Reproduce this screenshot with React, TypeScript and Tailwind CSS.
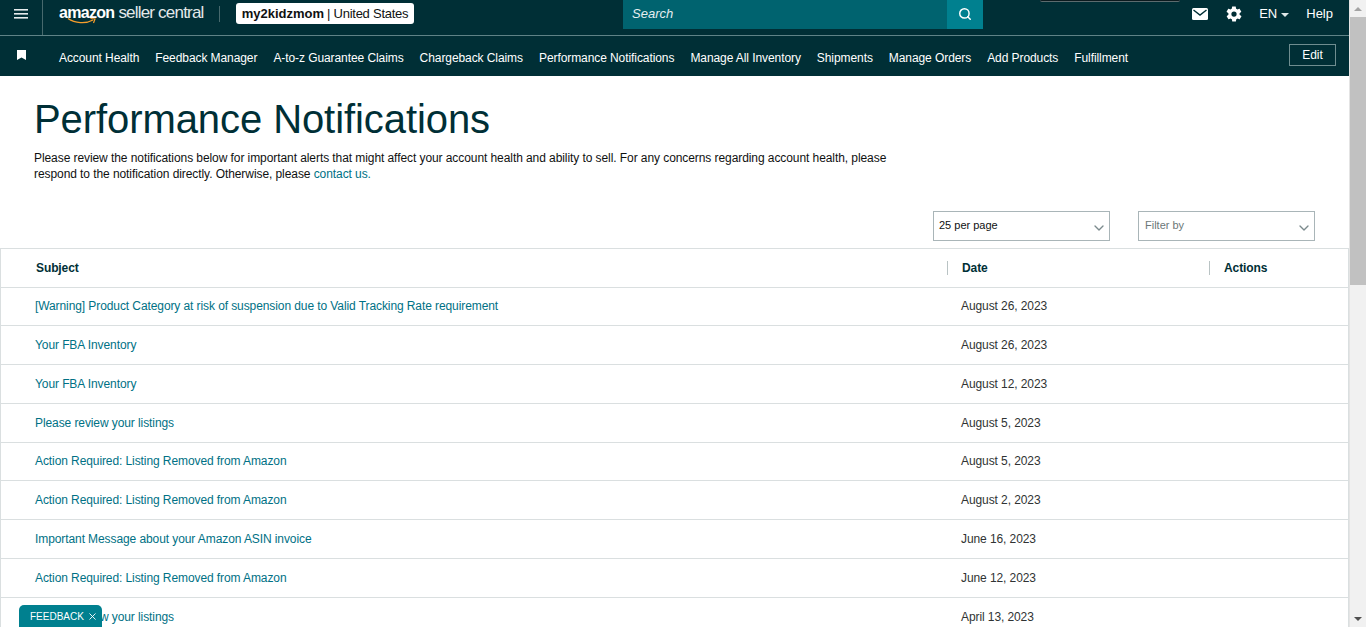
import { ChevronDown, Search, X } from 'lucide-react'

const navLinks = [
  'Account Health',
  'Feedback Manager',
  'A-to-z Guarantee Claims',
  'Chargeback Claims',
  'Performance Notifications',
  'Manage All Inventory',
  'Shipments',
  'Manage Orders',
  'Add Products',
  'Fulfillment',
]

const rows = [
  ['[Warning] Product Category at risk of suspension due to Valid Tracking Rate requirement', 'August 26, 2023'],
  ['Your FBA Inventory', 'August 26, 2023'],
  ['Your FBA Inventory', 'August 12, 2023'],
  ['Please review your listings', 'August 5, 2023'],
  ['Action Required: Listing Removed from Amazon', 'August 5, 2023'],
  ['Action Required: Listing Removed from Amazon', 'August 2, 2023'],
  ['Important Message about your Amazon ASIN invoice', 'June 16, 2023'],
  ['Action Required: Listing Removed from Amazon', 'June 12, 2023'],
  ['Please review your listings', 'April 13, 2023'],
]

function Dropdown({ label, muted }: { label: string; muted?: boolean }) {
  return (
    <div className={`flex h-[30px] w-[177px] items-center justify-between border border-[#a9b5b8] pr-[2px] ${muted ? 'pl-[6px]' : 'pl-[5px]'}`}>
      <span className={`mb-[2px] text-[11px] ${muted ? 'text-[#6c7778]' : 'text-[#0f1111]'}`}>{label}</span>
      <ChevronDown className="mt-[3px] h-[16px] w-[16px] text-[#7b8a8d]" strokeWidth={2} />
    </div>
  )
}

export default function App() {
  return (
    <div className="flex h-screen overflow-hidden bg-white font-['Liberation_Sans',Arial,sans-serif] text-[12px]">
      <div className="relative min-w-0 flex-1 overflow-hidden">
        {/* top bar */}
        <header className="relative flex h-[36px] items-start border-b border-[#5f8387] bg-[#002f36] text-white">
          <div className="flex h-[35px] w-[43px] items-center justify-center border-r border-[#47696d] pb-[8px]">
            <svg width="14" height="10" viewBox="0 0 14 10" fill="#e6eced">
              <rect width="14" height="1.6" />
              <rect y="4" width="14" height="1.6" />
              <rect y="8" width="14" height="1.6" />
            </svg>
          </div>
          <div className="relative ml-[16px] flex h-[25px] w-[145px] items-center whitespace-nowrap">
            <span className="text-[16px] font-bold leading-none tracking-[-0.7px]">amazon</span>
            <span className="ml-[4px] text-[17px] font-normal leading-none tracking-[-0.8px] text-[#e3e9ea]">seller central</span>
            <svg className="absolute left-[8px] top-[17px]" width="30" height="8" viewBox="0 0 30 8" fill="none">
              <path d="M1 1.5C8 6.5 19 7 26 3" stroke="#f59e2c" strokeWidth="1.4" />
              <path d="M23.5 1.5L28 2L26.5 6" stroke="#f59e2c" strokeWidth="1.2" />
            </svg>
          </div>
          <div className="ml-[15px] mt-[6px] h-[16px] w-px bg-[#47696d]" />
          <div className="ml-[16px] mt-[3px] flex h-[21px] w-[178px] items-center justify-center whitespace-nowrap rounded-[3px] bg-white text-[13px] text-[#0f1111]">
            <span className="font-bold">my2kidzmom</span>
            <span className="ml-[3px] tracking-[-0.25px]">| United States</span>
          </div>
          <div className="ml-[209px] flex h-[29px] w-[360px]">
            <div className="flex flex-1 items-center bg-[#00636f] pb-[2px] pl-[9px] text-[13px] italic text-[#e6eeef]">Search</div>
            <div className="flex w-[36px] items-center justify-center bg-[#00808f] pb-[2px]">
              <Search className="h-[14px] w-[14px] text-white" strokeWidth={2.5} />
            </div>
          </div>
          <div className="ml-auto flex h-[28px] items-center pr-[16px] text-[13px]">
            <svg width="16" height="12" viewBox="0 0 16 12">
              <rect width="16" height="12" rx="1.5" fill="#fff" />
              <path d="M1.5 2L8 7L14.5 2" fill="none" stroke="#002f36" strokeWidth="1.4" />
            </svg>
            <svg className="ml-[17px]" width="18" height="18" viewBox="0 0 24 24" fill="#fff">
              <path
                fillRule="evenodd"
                d="M19.4 13c.1-.3.1-.7.1-1s0-.7-.1-1l2.1-1.6c.2-.2.3-.4.1-.7l-2-3.4c-.1-.2-.4-.3-.6-.2l-2.5 1c-.5-.4-1.1-.7-1.7-1l-.4-2.6c0-.3-.2-.5-.5-.5h-4c-.3 0-.5.2-.5.5l-.4 2.6c-.6.3-1.2.6-1.7 1l-2.5-1c-.2-.1-.5 0-.6.2l-2 3.4c-.2.3-.1.5.1.7L4.6 11c-.1.3-.1.7-.1 1s0 .7.1 1l-2.1 1.6c-.2.2-.3.4-.1.7l2 3.4c.1.2.4.3.6.2l2.5-1c.5.4 1.1.7 1.7 1l.4 2.6c0 .3.2.5.5.5h4c.3 0 .5-.2.5-.5l.4-2.6c.6-.3 1.2-.6 1.7-1l2.5 1c.2.1.5 0 .6-.2l2-3.4c.2-.3.1-.5-.1-.7L19.4 13zM12 15.5a3.5 3.5 0 110-7 3.5 3.5 0 010 7z"
              />
            </svg>
            <span className="ml-[16px]">EN</span>
            <span className="ml-[4px] mt-[2px] h-0 w-0 border-x-[4px] border-t-[4px] border-x-transparent border-t-[#dfe7e8]" />
            <span className="ml-[17px]">Help</span>
          </div>
          <div className="absolute left-[1040px] top-0 h-[2px] w-[140px] rounded-b-[4px] border-b border-[#5c6b6e] bg-[#0b1a1e]" />
        </header>

        {/* nav */}
        <nav className="flex h-[40px] items-center bg-[#002f36] pr-[13px] text-white">
          <svg className="ml-[17px] mb-[2px]" width="9" height="10" viewBox="0 0 9 10" fill="#fff">
            <path d="M0 0H9V10L4.5 7.5L0 10Z" />
          </svg>
          <div className="ml-[33px] mt-[4px] flex items-center gap-[16px] tracking-[-0.08px]">
            {navLinks.map((l) => (
              <span key={l} className="whitespace-nowrap">{l}</span>
            ))}
          </div>
          <div className="ml-auto mb-[2px] flex h-[22px] w-[47px] items-center justify-center border border-[#6f8d90]">Edit</div>
        </nav>

        {/* heading */}
        <div className="px-[34px]">
          <h1 className="mt-[18px] text-[40px] leading-[50px] tracking-[-0.08px] text-[#002f36]">Performance Notifications</h1>
          <p className="mt-[6px] w-[880px] leading-[16px] tracking-[-0.076px] text-[#0f1111]">
            Please review the notifications below for important alerts that might affect your account health and ability to sell. For any concerns regarding account health, please respond to the notification directly. Otherwise, please{' '}
            <span className="text-[#007185]">contact us.</span>
          </p>
        </div>

        <div className="mr-[34px] mt-[29px] flex justify-end gap-[28px]">
          <Dropdown label="25 per page" />
          <Dropdown label="Filter by" muted />
        </div>

        {/* table */}
        <div className="mt-[7px] border-x border-t border-[#dadfe0]">
          <div className="flex h-[38.5px] items-center border-b border-[#dadfe0] font-bold tracking-[-0.1px] text-[#002f36]">
            <div className="w-[946px] pl-[35px]">Subject</div>
            <div className="h-[14px] w-px bg-[#b9c3c4]" />
            <div className="w-[261px] pl-[14px]">Date</div>
            <div className="h-[14px] w-px bg-[#b9c3c4]" />
            <div className="pl-[14px]">Actions</div>
          </div>
          {rows.map(([subject, date], i) => (
            <div key={i} className="flex h-[38.75px] items-center border-b border-[#dadfe0] tracking-[-0.09px] last:pt-[2px]">
              <div className="w-[960px] pl-[34px] text-[#007185]">{subject}</div>
              <div className="text-[#303333]">{date}</div>
            </div>
          ))}
        </div>

        <div className="absolute bottom-0 left-[19px] flex h-[22px] w-[83px] items-center rounded-t-[5px] bg-[#00808f] pl-[11px] text-[10px] text-white">
          <span>FEEDBACK</span>
          <X className="ml-[3px] h-[11px] w-[11px]" strokeWidth={2} />
        </div>
      </div>

      {/* scrollbar */}
      <div className="flex w-[17px] flex-col items-center border-l border-[#e4e4e4] bg-[#f1f1f1]">
        <div className="flex h-[17px] items-center justify-center">
          <span className="h-0 w-0 border-x-[4px] border-b-[4px] border-x-transparent border-b-[#a3a3a3]" />
        </div>
        <div className="h-[268px] w-full bg-[#c1c1c1]" />
        <div className="mt-auto flex h-[17px] items-center justify-center">
          <span className="h-0 w-0 border-x-[4px] border-t-[4px] border-x-transparent border-t-[#505050]" />
        </div>
      </div>
    </div>
  )
}
